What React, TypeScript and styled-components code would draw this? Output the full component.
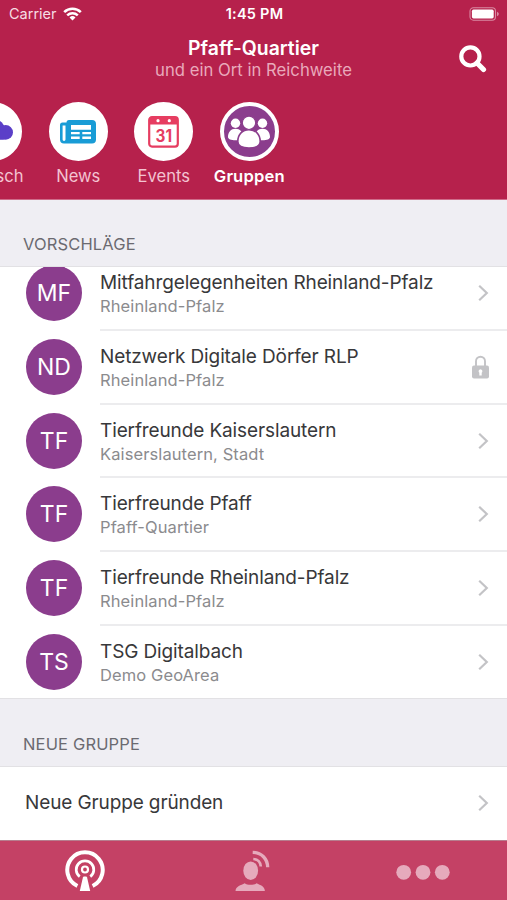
import React from "react";
import styled, { createGlobalStyle } from "styled-components";

const colors = {
  header: "#b6214c",
  tabBar: "#c44165",
  purple: "#8b3d8d",
  section: "#efeef3",
  line: "#e2e1e4",
  divider: "#ececee",
  muted: "#e6aabc",
};

const GlobalStyle = createGlobalStyle`
  * { box-sizing: border-box; }
  body { margin: 0; background: #fff; font-family: Inter, "Liberation Sans", sans-serif; }
`;

const Screen = styled.div`
  width: 507px;
  height: 900px;
  overflow: hidden;
  display: flex;
  flex-direction: column;
  background: #fff;
`;

const Header = styled.header`
  height: 200px;
  flex: none;
  background: ${colors.header};
  border-bottom: 1px solid #cf6c8a;
  color: #fff;
  overflow: hidden;
`;

const StatusBar = styled.div`
  height: 28px;
  padding: 0 7px 0 9px;
  display: grid;
  grid-template-columns: 1fr auto 1fr;
  align-items: center;
`;

const StatusSide = styled.div<{ $end?: boolean }>`
  display: flex;
  align-items: center;
  gap: 6px;
  justify-content: ${(p) => (p.$end ? "flex-end" : "flex-start")};
`;

const Label = styled.span<{
  $size: number;
  $line: number;
  $color: string;
  $weight?: number;
  $track?: number;
}>`
  display: block;
  white-space: nowrap;
  font-size: ${(p) => p.$size}px;
  line-height: ${(p) => p.$line}px;
  color: ${(p) => p.$color};
  font-weight: ${(p) => p.$weight ?? 400};
  letter-spacing: ${(p) => p.$track ?? 0}px;
`;

const TitleBar = styled.div`
  height: 74px;
  padding: 9px 20px 0;
  display: grid;
  grid-template-columns: 28px 1fr 28px;
`;

const TitleText = styled.div`
  display: flex;
  flex-direction: column;
  align-items: center;
`;

const SearchButton = styled.button`
  border: 0;
  padding: 8px 0 0;
  background: none;
  height: 37px;
`;

const Channels = styled.nav`
  display: flex;
  margin-left: -50px;
`;

const Channel = styled.div`
  flex: none;
  width: 85.5px;
  display: flex;
  flex-direction: column;
  align-items: center;
  gap: 4px;
`;

const Disc = styled.div<{ $active?: boolean }>`
  width: 59px;
  height: 59px;
  border-radius: 50%;
  border: 4px solid #fff;
  background: ${(p) => (p.$active ? colors.purple : "#fff")};
  display: grid;
  place-items: center;
`;

const SectionHeader = styled.div<{ $height: number }>`
  flex: none;
  height: ${(p) => p.$height}px;
  padding: 0 23px 11px;
  background: ${colors.section};
  border-bottom: 1px solid ${colors.line};
  display: flex;
  align-items: flex-end;
`;

const ListViewport = styled.div`
  flex: none;
  height: 432px;
  overflow: hidden;
  display: flex;
  flex-direction: column;
  justify-content: flex-end;
  border-bottom: 1px solid ${colors.line};
`;

const Row = styled.div`
  flex: none;
  height: 73.7px;
  padding-left: 26px;
  display: flex;
  align-items: stretch;

  &:last-child {
    height: 72.2px;
  }
`;

const Avatar = styled.div`
  width: 56px;
  height: 56px;
  margin: 8px 18px 0 0;
  border-radius: 50%;
  background: ${colors.purple};
  display: grid;
  place-items: center;
`;

const RowBody = styled.div<{ $line: boolean }>`
  flex: 1;
  padding: 14px 17px 0 0;
  display: flex;
  justify-content: space-between;
  border-bottom: ${(p) => (p.$line ? `2px solid ${colors.divider}` : "0")};
`;

const Accessory = styled.div`
  height: 44px;
  display: flex;
  align-items: center;
`;

const CreateRow = styled.div`
  flex: none;
  height: 73px;
  padding: 0 17px 2px 25px;
  display: flex;
  align-items: center;
  justify-content: space-between;
`;

const TabBar = styled.nav`
  flex: 1;
  background: ${colors.tabBar};
  border-top: 1px solid #b77d8e;
  display: grid;
  grid-template-columns: repeat(3, 169px);
`;

const Tab = styled.div`
  display: flex;
  justify-content: center;
  padding-top: 9px;
`;

const Wifi = () => (
  <svg width="19" height="14" viewBox="0 0 19 14" fill="none" stroke="#fff">
    <path d="M1.2 5.1a12 12 0 0 1 16.6 0" strokeWidth="2.6" />
    <path d="M4.2 8.3a7.7 7.7 0 0 1 10.6 0" strokeWidth="2.5" />
    <path d="M9.5 13.4 6.5 10.4a4.3 4.3 0 0 1 6 0z" fill="#fff" stroke="none" />
  </svg>
);

const Battery = () => (
  <svg width="31" height="14" viewBox="0 0 31 14">
    <rect x="1" y=".8" width="25.5" height="12.4" rx="3.4" fill="none" stroke="#d98aa2" strokeWidth="1.1" />
    <rect x="2.9" y="2.6" width="21.8" height="8.8" rx="1.6" fill="#fff" />
    <path d="M28 4.8c2.4.8 2.4 3.6 0 4.4z" fill="#d98aa2" />
  </svg>
);

const Search = () => (
  <svg width="28" height="28" viewBox="0 0 28 28" fill="none" stroke="#fff">
    <circle cx="11.4" cy="11.4" r="9.1" strokeWidth="4.2" />
    <path d="m18 18 6.500 6.500" strokeWidth="5.200" strokeLinecap="round" />
  </svg>
);

const Cloud = () => (
  <svg width="42" height="30" viewBox="0 0 42 30" fill="#5b3fc8">
    <circle cx="9" cy="15.700" r="7" />
    <circle cx="22.500" cy="13" r="10.500" />
    <circle cx="33.700" cy="15.400" r="7.300" />
    <rect x="8" y="12" width="26" height="10.700" rx="3" />
  </svg>
);

const NewsIcon = () => (
  <svg width="36" height="24" viewBox="0 0 36 24">
    <path d="M9 0h23a4 4 0 0 1 4 4v15.500a4 4 0 0 1-4 4H4a4 4 0 0 1-4-4V5a2.500 2.500 0 0 1 2.500-2.500h4A2.500 2.500 0 0 1 9 0z" fill="#199cd6" />
    <path d="M2.600 5.500h2.900v14a1.450 1.450 0 0 1-2.900 0z" fill="#fff" />
    <path d="M11 5h20v4.700H11zM11 12h8.700v2.300H11zM22.300 12H31v2.300h-8.700zM11 16.600h8.700v2.400H11zM22.300 16.600H31v2.400h-8.700z" fill="#fff" />
  </svg>
);

const CalendarIcon = () => (
  <svg width="31" height="32" viewBox="0 0 31 32">
    <rect x="1.200" y="1.200" width="28.600" height="29.400" rx="2.800" fill="#fff" stroke="#e63d61" strokeWidth="2.200" />
    <path d="M1 8.400V3.500A2.500 2.500 0 0 1 3.500 1h24A2.500 2.500 0 0 1 30 3.500v4.900z" fill="#e63d61" />
    <circle cx="10" cy="4.700" r="1.600" fill="#fff" />
    <circle cx="21.300" cy="4.700" r="1.600" fill="#fff" />
    <text x="7.500" y="25.900" fontSize="17" fontWeight="700" fill="#e63d61" textLength="16.500" lengthAdjust="spacingAndGlyphs" fontFamily="Inter, sans-serif">31</text>
  </svg>
);

const GroupIcon = () => (
  <svg width="44" height="34" viewBox="0 0 44 34" fill="#fff">
    <circle cx="8.500" cy="8.300" r="4.700" />
    <circle cx="35.500" cy="8.300" r="4.700" />
    <path d="M1 22c0-5 3-8.300 7.500-8.300S16 17 16 22c0 2-3 3.300-7.500 3.300S1 24 1 22zM28 22c0-5 3-8.300 7.500-8.300S43 17 43 22c0 2-3 3.300-7.500 3.300S28 24 28 22z" />
    <path d="M10.800 26.500c0-7.200 4.700-11.800 11.200-11.800s11.200 4.600 11.200 11.800c0 4.200-4.700 6.500-11.200 6.500s-11.200-2.300-11.200-6.500z" stroke={colors.purple} strokeWidth="1.600" />
    <circle cx="22" cy="7.800" r="6.700" stroke={colors.purple} strokeWidth="1.200" />
  </svg>
);

const Chevron = () => (
  <svg width="14" height="18" viewBox="0 0 14 18" fill="none" stroke="#c3c3c6" strokeWidth="2.200">
    <path d="m3.200 1.800 7.600 7.200-7.600 7.200" />
  </svg>
);

const Lock = () => (
  <svg width="20" height="24" viewBox="0 0 20 24">
    <path d="M6 11V6.200a4.500 4.500 0 0 1 9 0V11" fill="none" stroke="#c3c3c6" strokeWidth="1.900" />
    <rect x="2" y="10.500" width="17" height="13" rx="2" fill="#c3c3c6" />
    <path d="M10.500 14.200a2 2 0 0 1 1.200 3.500v2.800H9.300v-2.800a2 2 0 0 1 1.200-3.500z" fill="#fff" />
  </svg>
);

const Antenna = () => (
  <svg width="42" height="42" viewBox="0 0 42 42" fill="none" stroke="#fff">
    <path d="M13.400 36A17.700 17.700 0 1 1 28.600 36" strokeWidth="4" />
    <path d="M15.700 26.700A8.800 8.800 0 1 1 26.300 26.700" strokeWidth="2.700" />
    <circle cx="21" cy="19.500" r="3" strokeWidth="2.200" />
    <path d="M20 26.500h2c.6 0 .9.400 1.100 1L26.200 41H15.800l3.100-13.500c.2-.6.500-1 1.100-1z" fill="#fff" stroke="none" />
  </svg>
);

const Person = () => (
  <svg width="41" height="42" viewBox="0 0 41 42" fill="none" stroke={colors.muted}>
    <ellipse cx="17.700" cy="20.700" rx="7.400" ry="9.300" fill={colors.muted} stroke="none" />
    <path d="M2.500 41c.4-5 5.300-5.600 9.300-7.800 2 2.200 9.800 2.200 11.800 0 4 2.200 8 2.800 8.300 7.800z" fill={colors.muted} stroke="none" />
    <path d="M19.700 2.300c9 .2 14.800 6.600 15 15" strokeWidth="3.300" />
    <path d="M20.300 9c4.500.2 7.300 3.400 7.500 7.500" strokeWidth="2.700" />
  </svg>
);

const Dots = () => (
  <svg width="54" height="42" viewBox="0 0 54 42" fill={colors.muted}>
    <circle cx="7.700" cy="22.300" r="7.400" />
    <circle cx="27" cy="22.300" r="7.400" />
    <circle cx="46.300" cy="22.300" r="7.400" />
  </svg>
);

const channels = [
  { name: "Plausch", icon: <Cloud /> },
  { name: "News", icon: <NewsIcon /> },
  { name: "Events", icon: <CalendarIcon /> },
  { name: "Gruppen", icon: <GroupIcon />, active: true },
];

const groups = [
  { initials: "MF", name: "Mitfahrgelegenheiten Rheinland-Pfalz", place: "Rheinland-Pfalz" },
  { initials: "ND", name: "Netzwerk Digitale Dörfer RLP", place: "Rheinland-Pfalz", locked: true },
  { initials: "TF", name: "Tierfreunde Kaiserslautern", place: "Kaiserslautern, Stadt" },
  { initials: "TF", name: "Tierfreunde Pfaff", place: "Pfaff-Quartier" },
  { initials: "TF", name: "Tierfreunde Rheinland-Pfalz", place: "Rheinland-Pfalz" },
  { initials: "TS", name: "TSG Digitalbach", place: "Demo GeoArea" },
];

export default function App() {
  return (
    <Screen>
      <GlobalStyle />
      <Header>
        <StatusBar>
          <StatusSide>
            <Label $size={14.5} $line={18} $color="#f6dde4">Carrier</Label>
            <Wifi />
          </StatusSide>
          <Label $size={14.5} $line={18} $color="#fff" $weight={600} $track={0.25}>1:45 PM</Label>
          <StatusSide $end>
            <Battery />
          </StatusSide>
        </StatusBar>
        <TitleBar>
          <span />
          <TitleText>
            <Label $size={19.4} $line={23} $color="#fff" $weight={600}>Pfaff-Quartier</Label>
            <Label $size={16.7} $line={21} $color="#e9a9bb">und ein Ort in Reichweite</Label>
          </TitleText>
          <SearchButton aria-label="Suche">
            <Search />
          </SearchButton>
        </TitleBar>
        <Channels>
          {channels.map((c) => (
            <Channel key={c.name}>
              <Disc $active={c.active}>{c.icon}</Disc>
              <Label $size={16.6} $line={22} $color={c.active ? "#fff" : "#f3c3d1"} $weight={c.active ? 600 : 400} $track={c.active ? 0.15 : 0}>
                {c.name}
              </Label>
            </Channel>
          ))}
        </Channels>
      </Header>
      <SectionHeader $height={67}>
        <Label $size={16.5} $line={22} $color="#6b6a70" $track={0.15}>VORSCHLÄGE</Label>
      </SectionHeader>
      <ListViewport>
        {groups.map((g, i) => (
          <Row key={g.name}>
            <Avatar>
              <Label $size={23} $line={28} $color="#fff">{g.initials}</Label>
            </Avatar>
            <RowBody $line={i < groups.length - 1}>
              <div>
                <Label $size={19} $line={24} $color="#38383a" $track={-0.12}>{g.name}</Label>
                <Label $size={16.5} $line={23} $color="#8b8b8e" $track={0.1}>{g.place}</Label>
              </div>
              <Accessory>{g.locked ? <Lock /> : <Chevron />}</Accessory>
            </RowBody>
          </Row>
        ))}
      </ListViewport>
      <SectionHeader $height={68}>
        <Label $size={16.5} $line={22} $color="#6b6a70" $track={0.15}>NEUE GRUPPE</Label>
      </SectionHeader>
      <CreateRow>
        <Label $size={19} $line={24} $color="#38383a" $track={-0.12}>Neue Gruppe gründen</Label>
        <Chevron />
      </CreateRow>
      <TabBar>
        <Tab><Antenna /></Tab>
        <Tab><Person /></Tab>
        <Tab><Dots /></Tab>
      </TabBar>
    </Screen>
  );
}
